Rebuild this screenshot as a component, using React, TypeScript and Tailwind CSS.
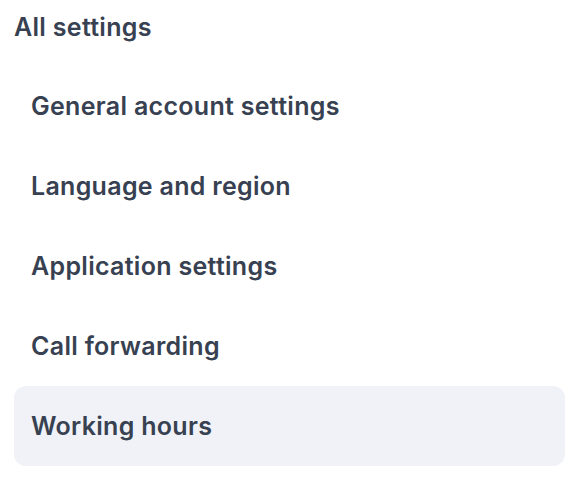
import React from "react";

const items = [
  "General account settings",
  "Language and region",
  "Application settings",
  "Call forwarding",
  "Working hours",
];

export default function App() {
  return (
    <div className="w-[582px] h-[488px] bg-white pl-[14px] pr-[17px] pt-[11px]" style={{ fontFamily: "Inter, 'Noto Sans', sans-serif" }}>
      <div className="text-[25px] leading-[32px] font-semibold tracking-[0.3px] text-[#374151] h-[55px]">All settings</div>
      <div className="flex flex-col">
        {items.map((it) => (
          <div
            key={it}
            className={
              "h-[80px] flex items-center px-[17px] pt-[2px] rounded-[12px] text-[25px] font-semibold tracking-[0.3px] text-[#374151] " +
              (it === "Working hours" ? "bg-[#f0f2f7]" : "")
            }
          >
            {it}
          </div>
        ))}
      </div>
    </div>
  );
}
